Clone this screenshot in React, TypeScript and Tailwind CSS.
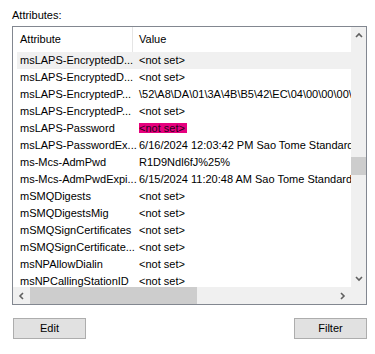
import React from "react";

type Row = { name: string; value: string; hover?: boolean; marked?: boolean };

const rows: Row[] = [
  { name: "msLAPS-EncryptedD...", value: "<not set>", hover: true },
  { name: "msLAPS-EncryptedD...", value: "<not set>" },
  { name: "msLAPS-EncryptedP...", value: "\\52\\A8\\DA\\01\\3A\\4B\\B5\\42\\EC\\04\\00\\00\\00\\00" },
  { name: "msLAPS-EncryptedP...", value: "<not set>" },
  { name: "msLAPS-Password", value: "<not set>", marked: true },
  { name: "msLAPS-PasswordEx...", value: "6/16/2024 12:03:42 PM Sao Tome Standard Time" },
  { name: "ms-Mcs-AdmPwd", value: "R1D9Ndl6fJ%25%" },
  { name: "ms-Mcs-AdmPwdExpi...", value: "6/15/2024 11:20:48 AM Sao Tome Standard Time" },
  { name: "mSMQDigests", value: "<not set>" },
  { name: "mSMQDigestsMig", value: "<not set>" },
  { name: "mSMQSignCertificates", value: "<not set>" },
  { name: "mSMQSignCertificate...", value: "<not set>" },
  { name: "msNPAllowDialin", value: "<not set>" },
  { name: "msNPCallingStationID", value: "<not set>" },
];

const Chevron = ({ dir }: { dir: "up" | "down" | "left" | "right" }) => {
  const d = {
    up: "M1 5 L4 2 L7 5",
    down: "M1 2 L4 5 L7 2",
    left: "M5 1 L2 4 L5 7",
    right: "M2 1 L5 4 L2 7",
  }[dir];
  return (
    <svg width="8" height="8" viewBox="0 0 8 8">
      <path d={d} fill="none" stroke="#606060" strokeWidth="1.6" />
    </svg>
  );
};

export default function App() {
  return (
    <div
      className="w-[375px] h-[354px] bg-white text-[11px] text-black flex flex-col"
      style={{ fontFamily: '"Liberation Sans", Arial, sans-serif' }}
    >
      <div className="pl-[12px] pt-[9px] h-[26px] leading-[13px]">Attributes:</div>

      <div className="ml-[12px] w-[355px] h-[279px] border border-[#828790] grid grid-cols-[1fr_15px] grid-rows-[1fr_17px]">
        {/* list content */}
        <div className="overflow-hidden flex flex-col">
          <div className="h-[25px] flex shrink-0">
            <div className="w-[120px] pl-[7px] flex items-center border-r border-[#e5e5e5]">Attribute</div>
            <div className="pl-[6px] flex items-center">Value</div>
          </div>
          {rows.map((r, i) => (
            <div
              key={i}
              className={`h-[17px] shrink-0 ml-[4px] flex items-center whitespace-nowrap ${r.hover ? "bg-[#f0f0f0]" : ""}`}
            >
              <div className="w-[116px] pl-[3px] shrink-0">{r.name}</div>
              <div className="pl-[6px] shrink-0">
                {r.marked ? (
                  <span className="bg-[#e6007e] text-[#2a0018] pr-[2px] leading-[10px] inline-block">{r.value}</span>
                ) : (
                  r.value
                )}
              </div>
            </div>
          ))}
        </div>

        {/* vertical scrollbar */}
        <div className="bg-[#f0f0f0] flex flex-col items-center">
          <div className="h-[17px] flex items-center justify-center">
            <Chevron dir="up" />
          </div>
          <div className="h-[113px]" />
          <div className="w-[15px] h-[18px] bg-[#cdcdcd]" />
          <div className="flex-1" />
          <div className="h-[17px] flex items-center justify-center">
            <Chevron dir="down" />
          </div>
        </div>

        {/* horizontal scrollbar */}
        <div className="bg-[#f0f0f0] flex items-center">
          <div className="w-[17px] flex items-center justify-center">
            <Chevron dir="left" />
          </div>
          <div className="w-[167px] h-[17px] bg-[#cdcdcd]" />
          <div className="flex-1" />
          <div className="w-[17px] flex items-center justify-center">
            <Chevron dir="right" />
          </div>
        </div>

        <div className="bg-[#f0f0f0]" />
      </div>

      <div className="flex justify-between pl-[13px] pr-[8px] mt-[13px]">
        <button className="w-[73px] h-[21px] bg-[#e1e1e1] border border-[#adadad] text-[11px] leading-none">Edit</button>
        <button className="w-[73px] h-[21px] bg-[#e1e1e1] border border-[#adadad] text-[11px] leading-none">Filter</button>
      </div>
    </div>
  );
}
